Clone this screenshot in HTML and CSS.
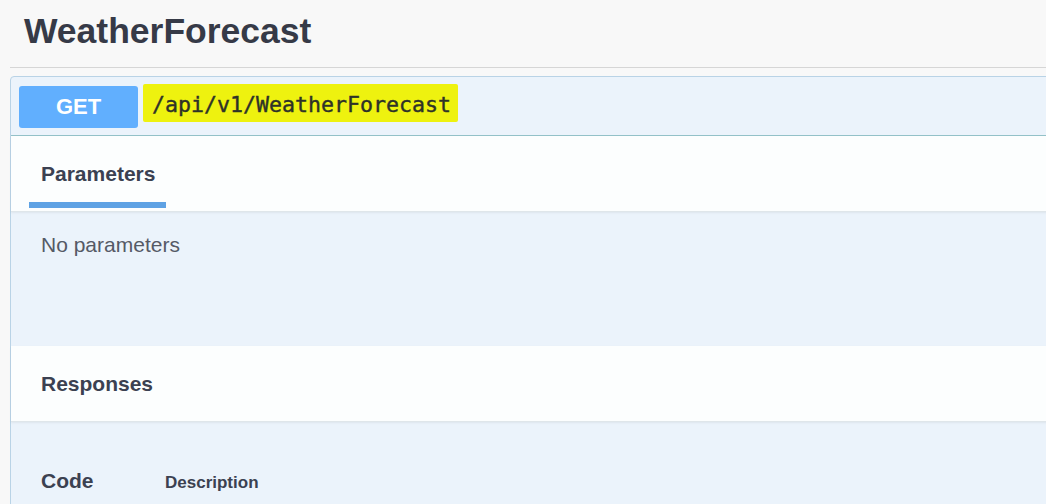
FILE: index.html
```html
<!DOCTYPE html>
<html lang="en">
<head>
	<meta charset="UTF-8">
	<title>WeatherForecast</title>
	<link rel="stylesheet" href="styles.css">
</head>
<body>
	<div class="tag">
		<h3>WeatherForecast</h3>
	</div>
	<div class="opblock">
		<div class="summary">
			<span class="method">GET</span>
			<span class="path">/api/v1/WeatherForecast</span>
		</div>
		<div class="section-head">
			<span class="tab">Parameters</span>
		</div>
		<div class="section-body params">
			<span>No parameters</span>
		</div>
		<div class="section-head resp">
			<span class="title">Responses</span>
		</div>
		<div class="section-body codes">
			<span class="col-code">Code</span>
			<span class="col-desc">Description</span>
		</div>
	</div>
</body>
</html>
```

FILE: styles.css
```css
body{margin: 0;background: #f8f8f8;font-family: "Liberation Sans", Arial, sans-serif;color: #3b4151;overflow: hidden;}
.tag{margin-left: 10px;padding-left: 14px;height: 67px;border-bottom: 1px solid #d6d6d6;}
.tag h3{margin: 0;padding-top: 11px;font-size: 35.5px;line-height: 40px;font-weight: bold;color: #363a47;}
.opblock{margin: 8px -20px 0 10px;border: 1px solid #b9d3e6;border-radius: 4px;background: #ebf3fb;}
.summary{display: flex;align-items: flex-start;padding: 9px 8px 7px;border-bottom: 1px solid #94c2c9;}
.summary .method{display: block;width: 119px;height: 42px;line-height: 42px;border-radius: 3px;background: #61affe;color: #fff;font-size: 22px;font-weight: bold;text-align: center;}
.summary .path{display: block;margin: -2px 0 0 5px;padding: 3px 7px 0 9px;height: 35px;line-height: 36px;border-radius: 2px;background: #eef20f;font-family: "DejaVu Sans Mono", "Liberation Mono", monospace;font-size: 21.6px;color: #2e3228;-webkit-text-stroke: 0.4px #2e3228;}
.section-head{padding: 23px 18px 3px;background: #fcfefe;border-bottom: 1px solid #dfe6ea;box-shadow: 0 1px 2px rgba(0,0,0,.06);}
.section-head .tab{display: inline-block;padding: 0 11px 13px 12px;line-height: 30px;font-size: 21px;font-weight: bold;border-bottom: 6px solid #5ea2e4;}
.section-head.resp{padding: 23px 30px 22px;}
.section-head .title{display: block;line-height: 30px;font-size: 21px;font-weight: bold;}
.section-body{padding: 0 30px;}
.section-body span{line-height: 30px;font-size: 21px;}
.params{padding-top: 18px;padding-bottom: 86px;color: #555a66;}
.codes{display: flex;align-items: baseline;padding-top: 44px;padding-bottom: 20px;}
.codes .col-code{width: 124px;font-weight: bold;}
.codes .col-desc{font-size: 17px;font-weight: bold;}
```
